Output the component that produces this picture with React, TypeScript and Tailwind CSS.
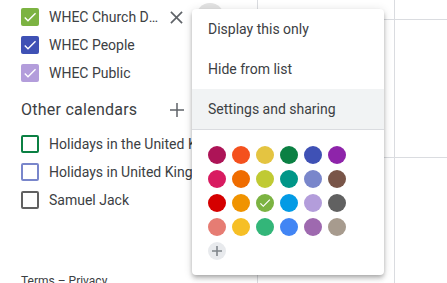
import React from "react";

type Calendar = { name: string; color: string; checked: boolean };

const myCalendars: Calendar[] = [
  { name: "WHEC Church Diary", color: "#7CB342", checked: true },
  { name: "WHEC People", color: "#3F51B5", checked: true },
  { name: "WHEC Public", color: "#B39DDB", checked: true },
];

const otherCalendars: Calendar[] = [
  { name: "Holidays in the United Kingdom", color: "#0B8043", checked: false },
  { name: "Holidays in United Kingdom", color: "#7986CB", checked: false },
  { name: "Samuel Jack", color: "#616161", checked: false },
];

const palette = [
  ["#AD1457", "#F4511E", "#E4C441", "#0B8043", "#3F51B5", "#8E24AA"],
  ["#D81B60", "#EF6C00", "#C0CA33", "#009688", "#7986CB", "#795548"],
  ["#D50000", "#F09300", "#7CB342", "#039BE5", "#B39DDB", "#616161"],
  ["#E67C73", "#F6BF26", "#33B679", "#4285F4", "#9E69AF", "#A79B8E"],
];

function Check({ size }: { size: number }) {
  return (
    <svg width={size} height={size} viewBox="0 0 24 24" fill="#fff">
      <path d="M9 16.17L4.83 12l-1.42 1.41L9 19 21 7l-1.41-1.41z" />
    </svg>
  );
}

function CalendarRow({ cal, hovered }: { cal: Calendar; hovered?: boolean }) {
  return (
    <div className="flex h-[28px] items-center pl-[21px]">
      {cal.checked ? (
        <span
          className="flex h-[18px] w-[18px] shrink-0 items-center justify-center rounded-[2px]"
          style={{ backgroundColor: cal.color }}
        >
          <Check size={16} />
        </span>
      ) : (
        <span
          className="h-[18px] w-[18px] shrink-0 rounded-[2px] border-2"
          style={{ borderColor: cal.color }}
        />
      )}
      <span
        className={`ml-[10px] whitespace-nowrap text-[14px] text-[#3c4043] ${
          hovered ? "w-[110px] overflow-hidden text-ellipsis" : ""
        }`}
      >
        {cal.name}
      </span>
      {hovered && (
        <>
          <span className="ml-[5px] flex h-[24px] w-[24px] items-center justify-center">
            <svg width="13" height="13" viewBox="0 0 14 14" stroke="#5f6368" strokeWidth="1.8">
              <path d="M1 1L13 13M13 1L1 13" />
            </svg>
          </span>
          <span className="ml-[8px] h-[28px] w-[28px] rounded-full bg-[#e3e3e3]" />
        </>
      )}
    </div>
  );
}

export default function App() {
  return (
    <div
      className="relative flex h-[283px] w-[447px] overflow-hidden bg-white"
      style={{ fontFamily: "Roboto, 'Liberation Sans', sans-serif" }}
    >
      <aside className="w-[257px] shrink-0 pt-[3px]">
        {myCalendars.map((cal, i) => (
          <CalendarRow key={cal.name} cal={cal} hovered={i === 0} />
        ))}
        <div className="mt-[3px] flex h-[40px] items-center pl-[21px]">
          <span className="w-[149px] text-[16px] tracking-[0.25px] text-[#3c4043]">Other calendars</span>
          <svg width="14" height="14" viewBox="0 0 14 14" stroke="#5f6368" strokeWidth="1.5">
            <path d="M7 0V14M0 7H14" />
          </svg>
        </div>
        {otherCalendars.map((cal) => (
          <CalendarRow key={cal.name} cal={cal} />
        ))}
        <div className="mt-[59px] pl-[21px] text-[12px] leading-[16px] text-[#3c4043]">
          Terms – Privacy
        </div>
      </aside>

      <main className="flex flex-1 flex-col border-l border-[#dadce0]">
        <div className="flex h-[20px] border-b border-[#dadce0]">
          <div className="w-[137px] border-r border-[#dadce0]" />
          <div className="flex-1" />
        </div>
        <div className="flex h-[138px] border-b border-[#dadce0]">
          <div className="w-[137px] border-r border-[#dadce0]" />
          <div className="flex-1" />
        </div>
        <div className="flex flex-1">
          <div className="w-[137px] border-r border-[#dadce0]" />
          <div className="flex-1" />
        </div>
      </main>

      <div className="absolute left-[192px] top-[9px] w-[192px] rounded-[4px] bg-white pb-[15px] shadow-[0_4px_5px_0_rgba(0,0,0,0.14),0_1px_10px_0_rgba(0,0,0,0.12),0_2px_4px_-1px_rgba(0,0,0,0.2)]">
        <div className="flex h-[40px] items-center pl-[16px] text-[14px] text-[#3c4043]">Display this only</div>
        <div className="flex h-[40px] items-center pl-[16px] text-[14px] text-[#3c4043]">Hide from list</div>
        <div className="flex h-[40px] items-center bg-[#f1f3f4] pl-[16px] text-[14px] text-[#3c4043]">
          Settings and sharing
        </div>
        <div className="h-px bg-[#dadce0]" />
        <div className="flex flex-col gap-[6px] pl-[16px] pt-[16px]">
          {palette.map((row, r) => (
            <div key={r} className="flex gap-[6px]">
              {row.map((c) => (
                <span
                  key={c}
                  className="flex h-[18px] w-[18px] items-center justify-center rounded-full"
                  style={{ backgroundColor: c }}
                >
                  {c === "#7CB342" && <Check size={14} />}
                </span>
              ))}
            </div>
          ))}
          <span className="flex h-[18px] w-[18px] items-center justify-center rounded-full bg-[#e8eaed]">
            <svg width="10" height="10" viewBox="0 0 10 10" stroke="#80868b" strokeWidth="1.6">
              <path d="M5 0V10M0 5H10" />
            </svg>
          </span>
        </div>
      </div>
    </div>
  );
}
